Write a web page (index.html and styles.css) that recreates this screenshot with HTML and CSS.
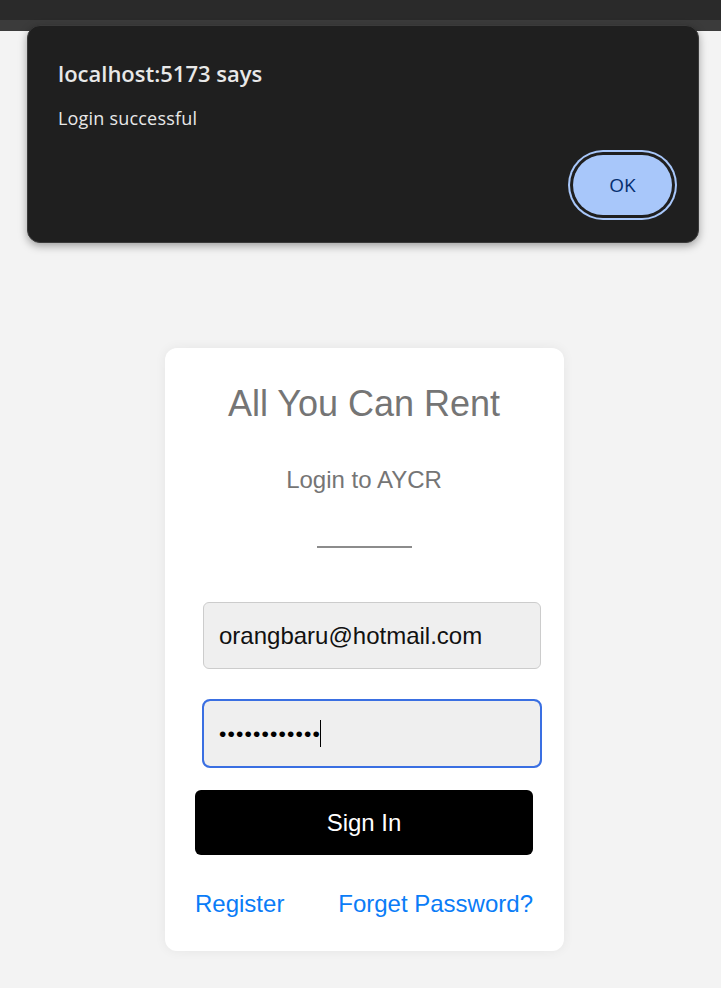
FILE: index.html
```html
<!DOCTYPE html>
<html lang="en">
<head>
<meta charset="utf-8">
<title>All You Can Rent</title>
<link rel="stylesheet" href="styles.css">
</head>
<body>
<div class="chrome">
  <div class="chrome-top"></div>
  <div class="chrome-bottom"></div>
</div>

<main class="page">
  <section class="card">
    <h1 class="title">All You Can Rent</h1>
    <p class="subtitle">Login to AYCR</p>
    <div class="rule"></div>
    <form class="form">
      <input class="field" type="email" value="orangbaru@hotmail.com">
      <div class="field field-focus"><span class="dots">••••••••••••</span><span class="caret"></span></div>
      <button class="signin" type="button">Sign In</button>
    </form>
    <div class="links">
      <a href="#" class="link">Register</a>
      <a href="#" class="link">Forget Password?</a>
    </div>
  </section>
</main>

<div class="dialog" role="alertdialog">
  <div class="dialog-title">localhost:5173 says</div>
  <div class="dialog-msg">Login successful</div>
  <div class="dialog-actions">
    <button class="ok" type="button">OK</button>
  </div>
</div>
</body>
</html>
```

FILE: styles.css
```css
* { box-sizing: border-box; }
html, body { margin: 0; padding: 0; }
body {
  background: #f3f3f3;
  font-family: "Liberation Sans", Arial, sans-serif;
  width: 721px;
  height: 988px;
  overflow: hidden;
}

.chrome-top { height: 20px; background: #2a2a2a; }
.chrome-bottom { height: 11px; background: #3b3b3b; }

.page {
  display: flex;
  justify-content: center;
  padding-left: 8px;
  padding-top: 317px;
}

.card {
  width: 399px;
  background: #fff;
  border-radius: 12px;
  box-shadow: 0 0 12px rgba(0,0,0,0.06);
  padding: 24px 31px 33px 30px;
  text-align: center;
}

.title {
  margin: 11px 0 0;
  font-size: 36px;
  line-height: 42px;
  font-weight: normal;
  color: #757575;
}
.subtitle {
  margin: 41px 0 0;
  font-size: 24px;
  line-height: 28px;
  color: #757575;
}
.rule {
  width: 95px;
  height: 2px;
  background: #8c8c8c;
  margin: 52px auto 0;
}

.form {
  display: flex;
  flex-direction: column;
  align-items: stretch;
  margin-top: 54px;
}
.field {
  display: flex;
  align-items: center;
  width: 338px;
  height: 67px;
  margin-left: 8px;
  padding: 0 15px;
  background: #efefef;
  border: 1px solid #cccccc;
  border-radius: 6px;
  font-family: "Liberation Sans", Arial, sans-serif;
  font-size: 24px;
  color: #111;
  text-align: left;
}
.field-focus {
  margin-top: 31px;
  border-color: #3a6fe2;
  outline: 2px solid #3a6fe2;
  outline-offset: -1px;
  border-radius: 7px;
}
.dots {
  font-size: 21px;
  letter-spacing: 1.15px;
  color: #000;
}
.caret {
  display: inline-block;
  width: 1px;
  height: 27px;
  background: #000;
  margin-left: -1px;
}

.signin {
  margin-top: 23px;
  height: 65px;
  width: 338px;
  background: #000;
  color: #fff;
  border: none;
  border-radius: 6px;
  font-family: "Liberation Sans", Arial, sans-serif;
  font-size: 24px;
}

.links {
  display: flex;
  justify-content: space-between;
  margin-top: 35px;
  width: 338px;
  line-height: 28px;
}
.link {
  color: #0a7cf7;
  text-decoration: none;
  font-size: 24px;
}

.dialog {
  position: absolute;
  left: 27px;
  top: 25px;
  width: 672px;
  height: 218px;
  background: #1f1f1f;
  border: 1px solid #3a3a3a;
  border-radius: 13px;
  box-shadow: 0 3px 8px rgba(0,0,0,0.35);
  padding: 33px 26px 0 30px;
  font-family: "Open Sans", "Noto Sans", sans-serif;
  color: #e8e8e8;
  display: flex;
  flex-direction: column;
}
.dialog-title {
  font-size: 22px;
  font-weight: 600;
  line-height: 28px;
  letter-spacing: 0;
}
.dialog-msg {
  margin-top: 19px;
  font-size: 18px;
  line-height: 24px;
  letter-spacing: 0.2px;
}
.dialog-actions {
  display: flex;
  justify-content: flex-end;
  margin-top: 25px;
}
.ok {
  width: 99px;
  height: 60px;
  border: none;
  border-radius: 30px;
  background: #a8c7fa;
  color: #062e6f;
  font-family: "Open Sans", "Noto Sans", sans-serif;
  font-size: 19px;
  box-shadow: 0 0 0 3px #1f1f1f, 0 0 0 5px #a8c7fa;
}
```
